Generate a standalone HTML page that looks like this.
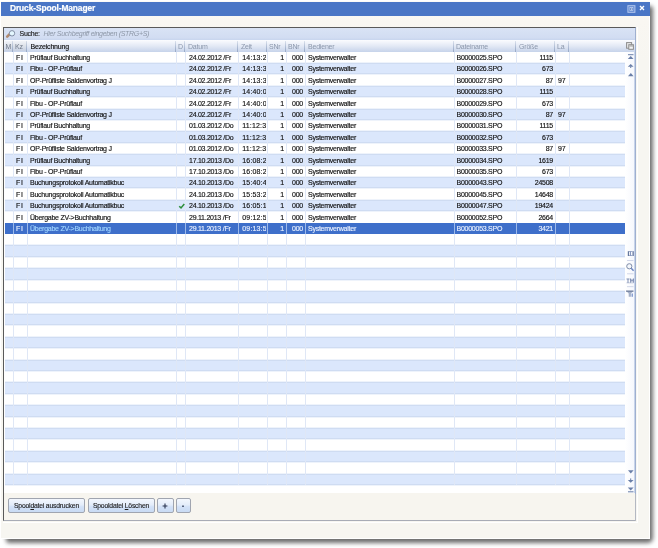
<!DOCTYPE html><html><head><meta charset="utf-8"><style>
*{margin:0;padding:0;box-sizing:border-box}
html,body{width:658px;height:548px;overflow:hidden;background:#fff;font-family:"Liberation Sans",sans-serif;font-variant-ligatures:none}
.abs{position:absolute}
#shadow{position:absolute;left:6px;top:6px;width:647px;height:536.5px;background:#6e6e6e;filter:blur(2.1px);border-radius:0 3px 5px 3px}
#win{position:absolute;left:1px;top:1px;width:649px;height:538px;background:linear-gradient(#fcfbf8,#f9f7f2 20px,#f7f6f1 60px);box-shadow:inset -1px -1px 0 #fff}
#root{position:absolute;left:0;top:0;width:658px;height:548px;will-change:transform}
#title{position:absolute;left:1px;top:1.5px;width:649px;height:14px;background:#4a76c6}
#ttext{position:absolute;left:10px;top:3px;font-size:8.4px;letter-spacing:-0.1px;font-weight:bold;color:#fff;white-space:nowrap;-webkit-text-stroke:0.2px #fff}
#panel{position:absolute;left:3px;top:27px;width:633px;height:494px;border-top:1px solid #5a5a5a;border-left:1px solid #5a5a5a;border-right:1px solid #9fb0d0;border-bottom:1px solid #a8acb6;background:#f7f5ef}
#search{position:absolute;left:4px;top:28px;width:631px;height:12px;background:linear-gradient(#d9e3f5,#d2ddf2 80%,#c8d5ee)}
#hdr{position:absolute;left:4px;top:40px;width:631px;height:11.5px;background:linear-gradient(#fbfcfe,#e3e9f5 50%,#c6d3ea)}
#grid{position:absolute;left:4px;top:51.5px;width:631px;height:441.5px;background:#fff}
.row{position:absolute;left:5px;width:620px;height:11.41px}
.alt{background:#dbe7fc;box-shadow:inset 0 1px 0 #cfdcf2,inset 0 -1px 0 #cfdcf2,0 1px 0 #eef3fb,0 -1px 0 #eef3fb}
.sel{background:#3e6fca}
.vl{position:absolute;width:1px;background:#dfe7f6}
.hs{position:absolute;top:41px;width:1px;height:10.5px;background:linear-gradient(rgba(160,176,200,0.3),#98a9c6)}
.t{position:absolute;font-size:7px;letter-spacing:-0.25px;white-space:nowrap;color:#111;line-height:11.41px;-webkit-text-stroke:0.15px currentColor}
.ht{position:absolute;top:40.8px;font-size:7px;letter-spacing:-0.2px;white-space:nowrap;color:#8a96ab;line-height:11.5px}
.r{text-align:right}
#sb{position:absolute;left:625px;top:51.5px;width:10px;height:441.5px;background:linear-gradient(90deg,#fff,#f6f8fd);border-right:1px solid #c8d4ea}
.btn{position:absolute;top:498px;height:14.5px;border:1px solid #a0a5b0;border-radius:2px;background:linear-gradient(#f3f7fd,#e4edfa 45%,#d2e1f7 60%,#c9dbf4);font-size:6.8px;letter-spacing:-0.2px;color:#1e1e1e;text-align:center;line-height:14px;-webkit-text-stroke:0.12px #1e1e1e;white-space:nowrap}
</style></head><body>
<div id="shadow"></div><div id="win"></div><div id="root">
<div id="title"></div><div id="ttext">Druck-Spool-Manager</div>
<svg class="abs" style="left:627px;top:4.5px" width="9" height="8" viewBox="0 0 9 8"><rect x="0.9" y="0.7" width="7" height="6.6" fill="#6088d0" stroke="#b4c8ee" stroke-width="1"/><rect x="2.9" y="2.5" width="3" height="3" fill="#4a72bc" stroke="#c8d8f4" stroke-width="0.7"/><rect x="3.9" y="3.5" width="1.1" height="1.1" fill="#fff"/></svg>
<svg class="abs" style="left:639.3px;top:4.8px" width="6" height="6" viewBox="0 0 6 6"><path d="M1 1L5 5M5 1L1 5" stroke="#fff" stroke-width="1.4"/></svg>
<div class="abs" style="left:3px;top:27px;width:635px;height:496px;border-right:1px solid #fff;border-bottom:1px solid #fff"></div>
<div id="panel"></div>
<div class="abs" style="left:635px;top:494px;width:1px;height:27px;background:#b4b8c2"></div>
<div id="search"></div>
<div id="hdr"></div>
<div class="abs" style="left:4.5px;top:40.5px;width:22px;height:10.5px;background:linear-gradient(#f2f4f8,#dde2ea 50%,#c6d0e2)"></div>
<div id="grid"></div>
<div class="row" style="top:51.50px"></div>
<div class="row alt" style="top:62.91px"></div>
<div class="row" style="top:74.32px"></div>
<div class="row alt" style="top:85.73px"></div>
<div class="row" style="top:97.14px"></div>
<div class="row alt" style="top:108.55px"></div>
<div class="row" style="top:119.96px"></div>
<div class="row alt" style="top:131.37px"></div>
<div class="row" style="top:142.78px"></div>
<div class="row alt" style="top:154.19px"></div>
<div class="row" style="top:165.60px"></div>
<div class="row alt" style="top:177.01px"></div>
<div class="row" style="top:188.42px"></div>
<div class="row alt" style="top:199.83px"></div>
<div class="row" style="top:211.24px"></div>
<div class="row sel" style="top:222.65px"></div>
<div class="row" style="top:234.06px"></div>
<div class="row alt" style="top:245.47px"></div>
<div class="row" style="top:256.88px"></div>
<div class="row alt" style="top:268.29px"></div>
<div class="row" style="top:279.70px"></div>
<div class="row alt" style="top:291.11px"></div>
<div class="row" style="top:302.52px"></div>
<div class="row alt" style="top:313.93px"></div>
<div class="row" style="top:325.34px"></div>
<div class="row alt" style="top:336.75px"></div>
<div class="row" style="top:348.16px"></div>
<div class="row alt" style="top:359.57px"></div>
<div class="row" style="top:370.98px"></div>
<div class="row alt" style="top:382.39px"></div>
<div class="row" style="top:393.80px"></div>
<div class="row alt" style="top:405.21px"></div>
<div class="row" style="top:416.62px"></div>
<div class="row alt" style="top:428.03px"></div>
<div class="row" style="top:439.44px"></div>
<div class="row alt" style="top:450.85px"></div>
<div class="row" style="top:462.26px"></div>
<div class="row alt" style="top:473.67px"></div>
<div class="vl" style="left:13.0px;top:51.5px;height:433.6px"></div>
<div class="vl" style="left:27.0px;top:51.5px;height:433.6px"></div>
<div class="vl" style="left:176.0px;top:51.5px;height:433.6px"></div>
<div class="vl" style="left:185.0px;top:51.5px;height:433.6px"></div>
<div class="vl" style="left:238.0px;top:51.5px;height:433.6px"></div>
<div class="vl" style="left:267.0px;top:51.5px;height:433.6px"></div>
<div class="vl" style="left:286.0px;top:51.5px;height:433.6px"></div>
<div class="vl" style="left:305.3px;top:51.5px;height:433.6px"></div>
<div class="vl" style="left:454.0px;top:51.5px;height:433.6px"></div>
<div class="vl" style="left:516.0px;top:51.5px;height:433.6px"></div>
<div class="vl" style="left:554.5px;top:51.5px;height:433.6px"></div>
<div class="vl" style="left:569.0px;top:51.5px;height:433.6px"></div>
<div class="vl" style="left:13.0px;top:222.65px;height:11.41px;background:#9dbaea"></div>
<div class="vl" style="left:27.0px;top:222.65px;height:11.41px;background:#9dbaea"></div>
<div class="vl" style="left:176.0px;top:222.65px;height:11.41px;background:#9dbaea"></div>
<div class="vl" style="left:185.0px;top:222.65px;height:11.41px;background:#9dbaea"></div>
<div class="vl" style="left:238.0px;top:222.65px;height:11.41px;background:#9dbaea"></div>
<div class="vl" style="left:267.0px;top:222.65px;height:11.41px;background:#9dbaea"></div>
<div class="vl" style="left:286.0px;top:222.65px;height:11.41px;background:#9dbaea"></div>
<div class="vl" style="left:305.3px;top:222.65px;height:11.41px;background:#9dbaea"></div>
<div class="vl" style="left:454.0px;top:222.65px;height:11.41px;background:#9dbaea"></div>
<div class="vl" style="left:516.0px;top:222.65px;height:11.41px;background:#9dbaea"></div>
<div class="vl" style="left:554.5px;top:222.65px;height:11.41px;background:#9dbaea"></div>
<div class="vl" style="left:569.0px;top:222.65px;height:11.41px;background:#9dbaea"></div>
<div class="hs" style="left:12.0px"></div>
<div class="hs" style="left:26.0px"></div>
<div class="hs" style="left:175.0px"></div>
<div class="hs" style="left:184.0px"></div>
<div class="hs" style="left:237.0px"></div>
<div class="hs" style="left:266.0px"></div>
<div class="hs" style="left:285.0px"></div>
<div class="hs" style="left:304.3px"></div>
<div class="hs" style="left:453.0px"></div>
<div class="hs" style="left:515.0px"></div>
<div class="hs" style="left:553.5px"></div>
<div class="hs" style="left:568.0px"></div>
<div class="ht" style="left:5.5px;color:#6f7888">M</div>
<div class="ht" style="left:15px;color:#6f7888">Kz</div>
<div class="ht" style="left:30.6px;color:#111;-webkit-text-stroke:0.15px #111">Bezeichnung</div>
<div class="ht" style="left:178px;color:#8a96ab">D</div>
<div class="ht" style="left:188px;color:#8a96ab">Datum</div>
<div class="ht" style="left:241px;color:#8a96ab">Zeit</div>
<div class="ht" style="left:269px;color:#8a96ab">SNr</div>
<div class="ht" style="left:288px;color:#8a96ab">BNr</div>
<div class="ht" style="left:308px;color:#8a96ab">Bediener</div>
<div class="ht" style="left:456px;color:#8a96ab">Dateiname</div>
<div class="ht" style="left:519px;color:#8a96ab">Größe</div>
<div class="ht" style="left:557px;color:#8a96ab">La</div>
<div class="t" style="left:19.5px;top:27.5px;color:#222">Suche:</div>
<div class="t" style="left:43.6px;top:27.5px;color:#8e98a8;font-style:italic;letter-spacing:-0.3px;-webkit-text-stroke:0">Hier Suchbegriff eingeben (STRG+S)</div>
<div class="t" style="left:16px;top:51.90px;color:#111;letter-spacing:0.6px">FI</div>
<div class="t" style="left:30px;top:51.90px;color:#111">Prüflauf Buchhaltung</div>
<div class="t" style="left:189px;top:51.90px;color:#111">24.02.2012 /Fr</div>
<div class="t" style="left:242.3px;top:51.90px;color:#111;width:24.2px;overflow:hidden;letter-spacing:0.15px">14:13:29</div>
<div class="t r" style="left:267px;width:17px;top:51.90px;color:#111">1</div>
<div class="t r" style="left:286px;width:17px;top:51.90px;color:#111">000</div>
<div class="t" style="left:308px;top:51.90px;color:#111">Systemverwalter</div>
<div class="t" style="left:456.5px;top:51.90px;color:#111">B0000025.SPO</div>
<div class="t r" style="left:516px;width:37px;top:51.90px;color:#111">1115</div>
<div class="t" style="left:16px;top:63.31px;color:#111;letter-spacing:0.6px">FI</div>
<div class="t" style="left:30px;top:63.31px;color:#111">Fibu - OP-Prüflauf</div>
<div class="t" style="left:189px;top:63.31px;color:#111">24.02.2012 /Fr</div>
<div class="t" style="left:242.3px;top:63.31px;color:#111;width:24.2px;overflow:hidden;letter-spacing:0.15px">14:13:30</div>
<div class="t r" style="left:267px;width:17px;top:63.31px;color:#111">1</div>
<div class="t r" style="left:286px;width:17px;top:63.31px;color:#111">000</div>
<div class="t" style="left:308px;top:63.31px;color:#111">Systemverwalter</div>
<div class="t" style="left:456.5px;top:63.31px;color:#111">B0000026.SPO</div>
<div class="t r" style="left:516px;width:37px;top:63.31px;color:#111">673</div>
<div class="t" style="left:16px;top:74.72px;color:#111;letter-spacing:0.6px">FI</div>
<div class="t" style="left:30px;top:74.72px;color:#111">OP-Prüfliste Saldenvortrag J</div>
<div class="t" style="left:189px;top:74.72px;color:#111">24.02.2012 /Fr</div>
<div class="t" style="left:242.3px;top:74.72px;color:#111;width:24.2px;overflow:hidden;letter-spacing:0.15px">14:13:33</div>
<div class="t r" style="left:267px;width:17px;top:74.72px;color:#111">1</div>
<div class="t r" style="left:286px;width:17px;top:74.72px;color:#111">000</div>
<div class="t" style="left:308px;top:74.72px;color:#111">Systemverwalter</div>
<div class="t" style="left:456.5px;top:74.72px;color:#111">B0000027.SPO</div>
<div class="t r" style="left:516px;width:37px;top:74.72px;color:#111">87</div>
<div class="t" style="left:558px;top:74.72px;color:#111">97</div>
<div class="t" style="left:16px;top:86.13px;color:#111;letter-spacing:0.6px">FI</div>
<div class="t" style="left:30px;top:86.13px;color:#111">Prüflauf Buchhaltung</div>
<div class="t" style="left:189px;top:86.13px;color:#111">24.02.2012 /Fr</div>
<div class="t" style="left:242.3px;top:86.13px;color:#111;width:24.2px;overflow:hidden;letter-spacing:0.15px">14:40:05</div>
<div class="t r" style="left:267px;width:17px;top:86.13px;color:#111">1</div>
<div class="t r" style="left:286px;width:17px;top:86.13px;color:#111">000</div>
<div class="t" style="left:308px;top:86.13px;color:#111">Systemverwalter</div>
<div class="t" style="left:456.5px;top:86.13px;color:#111">B0000028.SPO</div>
<div class="t r" style="left:516px;width:37px;top:86.13px;color:#111">1115</div>
<div class="t" style="left:16px;top:97.54px;color:#111;letter-spacing:0.6px">FI</div>
<div class="t" style="left:30px;top:97.54px;color:#111">Fibu - OP-Prüflauf</div>
<div class="t" style="left:189px;top:97.54px;color:#111">24.02.2012 /Fr</div>
<div class="t" style="left:242.3px;top:97.54px;color:#111;width:24.2px;overflow:hidden;letter-spacing:0.15px">14:40:06</div>
<div class="t r" style="left:267px;width:17px;top:97.54px;color:#111">1</div>
<div class="t r" style="left:286px;width:17px;top:97.54px;color:#111">000</div>
<div class="t" style="left:308px;top:97.54px;color:#111">Systemverwalter</div>
<div class="t" style="left:456.5px;top:97.54px;color:#111">B0000029.SPO</div>
<div class="t r" style="left:516px;width:37px;top:97.54px;color:#111">673</div>
<div class="t" style="left:16px;top:108.95px;color:#111;letter-spacing:0.6px">FI</div>
<div class="t" style="left:30px;top:108.95px;color:#111">OP-Prüfliste Saldenvortrag J</div>
<div class="t" style="left:189px;top:108.95px;color:#111">24.02.2012 /Fr</div>
<div class="t" style="left:242.3px;top:108.95px;color:#111;width:24.2px;overflow:hidden;letter-spacing:0.15px">14:40:08</div>
<div class="t r" style="left:267px;width:17px;top:108.95px;color:#111">1</div>
<div class="t r" style="left:286px;width:17px;top:108.95px;color:#111">000</div>
<div class="t" style="left:308px;top:108.95px;color:#111">Systemverwalter</div>
<div class="t" style="left:456.5px;top:108.95px;color:#111">B0000030.SPO</div>
<div class="t r" style="left:516px;width:37px;top:108.95px;color:#111">87</div>
<div class="t" style="left:558px;top:108.95px;color:#111">97</div>
<div class="t" style="left:16px;top:120.36px;color:#111;letter-spacing:0.6px">FI</div>
<div class="t" style="left:30px;top:120.36px;color:#111">Prüflauf Buchhaltung</div>
<div class="t" style="left:189px;top:120.36px;color:#111">01.03.2012 /Do</div>
<div class="t" style="left:242.3px;top:120.36px;color:#111;width:24.2px;overflow:hidden;letter-spacing:0.15px">11:12:31</div>
<div class="t r" style="left:267px;width:17px;top:120.36px;color:#111">1</div>
<div class="t r" style="left:286px;width:17px;top:120.36px;color:#111">000</div>
<div class="t" style="left:308px;top:120.36px;color:#111">Systemverwalter</div>
<div class="t" style="left:456.5px;top:120.36px;color:#111">B0000031.SPO</div>
<div class="t r" style="left:516px;width:37px;top:120.36px;color:#111">1115</div>
<div class="t" style="left:16px;top:131.77px;color:#111;letter-spacing:0.6px">FI</div>
<div class="t" style="left:30px;top:131.77px;color:#111">Fibu - OP-Prüflauf</div>
<div class="t" style="left:189px;top:131.77px;color:#111">01.03.2012 /Do</div>
<div class="t" style="left:242.3px;top:131.77px;color:#111;width:24.2px;overflow:hidden;letter-spacing:0.15px">11:12:32</div>
<div class="t r" style="left:267px;width:17px;top:131.77px;color:#111">1</div>
<div class="t r" style="left:286px;width:17px;top:131.77px;color:#111">000</div>
<div class="t" style="left:308px;top:131.77px;color:#111">Systemverwalter</div>
<div class="t" style="left:456.5px;top:131.77px;color:#111">B0000032.SPO</div>
<div class="t r" style="left:516px;width:37px;top:131.77px;color:#111">673</div>
<div class="t" style="left:16px;top:143.18px;color:#111;letter-spacing:0.6px">FI</div>
<div class="t" style="left:30px;top:143.18px;color:#111">OP-Prüfliste Saldenvortrag J</div>
<div class="t" style="left:189px;top:143.18px;color:#111">01.03.2012 /Do</div>
<div class="t" style="left:242.3px;top:143.18px;color:#111;width:24.2px;overflow:hidden;letter-spacing:0.15px">11:12:36</div>
<div class="t r" style="left:267px;width:17px;top:143.18px;color:#111">1</div>
<div class="t r" style="left:286px;width:17px;top:143.18px;color:#111">000</div>
<div class="t" style="left:308px;top:143.18px;color:#111">Systemverwalter</div>
<div class="t" style="left:456.5px;top:143.18px;color:#111">B0000033.SPO</div>
<div class="t r" style="left:516px;width:37px;top:143.18px;color:#111">87</div>
<div class="t" style="left:558px;top:143.18px;color:#111">97</div>
<div class="t" style="left:16px;top:154.59px;color:#111;letter-spacing:0.6px">FI</div>
<div class="t" style="left:30px;top:154.59px;color:#111">Prüflauf Buchhaltung</div>
<div class="t" style="left:189px;top:154.59px;color:#111">17.10.2013 /Do</div>
<div class="t" style="left:242.3px;top:154.59px;color:#111;width:24.2px;overflow:hidden;letter-spacing:0.15px">16:08:26</div>
<div class="t r" style="left:267px;width:17px;top:154.59px;color:#111">1</div>
<div class="t r" style="left:286px;width:17px;top:154.59px;color:#111">000</div>
<div class="t" style="left:308px;top:154.59px;color:#111">Systemverwalter</div>
<div class="t" style="left:456.5px;top:154.59px;color:#111">B0000034.SPO</div>
<div class="t r" style="left:516px;width:37px;top:154.59px;color:#111">1619</div>
<div class="t" style="left:16px;top:166.00px;color:#111;letter-spacing:0.6px">FI</div>
<div class="t" style="left:30px;top:166.00px;color:#111">Fibu - OP-Prüflauf</div>
<div class="t" style="left:189px;top:166.00px;color:#111">17.10.2013 /Do</div>
<div class="t" style="left:242.3px;top:166.00px;color:#111;width:24.2px;overflow:hidden;letter-spacing:0.15px">16:08:28</div>
<div class="t r" style="left:267px;width:17px;top:166.00px;color:#111">1</div>
<div class="t r" style="left:286px;width:17px;top:166.00px;color:#111">000</div>
<div class="t" style="left:308px;top:166.00px;color:#111">Systemverwalter</div>
<div class="t" style="left:456.5px;top:166.00px;color:#111">B0000035.SPO</div>
<div class="t r" style="left:516px;width:37px;top:166.00px;color:#111">673</div>
<div class="t" style="left:16px;top:177.41px;color:#111;letter-spacing:0.6px">FI</div>
<div class="t" style="left:30px;top:177.41px;color:#111">Buchungsprotokoll Automatikbuc</div>
<div class="t" style="left:189px;top:177.41px;color:#111">24.10.2013 /Do</div>
<div class="t" style="left:242.3px;top:177.41px;color:#111;width:24.2px;overflow:hidden;letter-spacing:0.15px">15:40:48</div>
<div class="t r" style="left:267px;width:17px;top:177.41px;color:#111">1</div>
<div class="t r" style="left:286px;width:17px;top:177.41px;color:#111">000</div>
<div class="t" style="left:308px;top:177.41px;color:#111">Systemverwalter</div>
<div class="t" style="left:456.5px;top:177.41px;color:#111">B0000043.SPO</div>
<div class="t r" style="left:516px;width:37px;top:177.41px;color:#111">24508</div>
<div class="t" style="left:16px;top:188.82px;color:#111;letter-spacing:0.6px">FI</div>
<div class="t" style="left:30px;top:188.82px;color:#111">Buchungsprotokoll Automatikbuc</div>
<div class="t" style="left:189px;top:188.82px;color:#111">24.10.2013 /Do</div>
<div class="t" style="left:242.3px;top:188.82px;color:#111;width:24.2px;overflow:hidden;letter-spacing:0.15px">15:53:22</div>
<div class="t r" style="left:267px;width:17px;top:188.82px;color:#111">1</div>
<div class="t r" style="left:286px;width:17px;top:188.82px;color:#111">000</div>
<div class="t" style="left:308px;top:188.82px;color:#111">Systemverwalter</div>
<div class="t" style="left:456.5px;top:188.82px;color:#111">B0000045.SPO</div>
<div class="t r" style="left:516px;width:37px;top:188.82px;color:#111">14648</div>
<div class="t" style="left:16px;top:200.23px;color:#111;letter-spacing:0.6px">FI</div>
<div class="t" style="left:30px;top:200.23px;color:#111">Buchungsprotokoll Automatikbuc</div>
<svg class="abs" style="left:178px;top:201.23px" width="8" height="9" viewBox="0 0 8 9"><path d="M1.2 5.2L3 6.9L6.3 2.9" fill="none" stroke="#2e8f3c" stroke-width="1.5"/></svg>
<div class="t" style="left:189px;top:200.23px;color:#111">24.10.2013 /Do</div>
<div class="t" style="left:242.3px;top:200.23px;color:#111;width:24.2px;overflow:hidden;letter-spacing:0.15px">16:05:15</div>
<div class="t r" style="left:267px;width:17px;top:200.23px;color:#111">1</div>
<div class="t r" style="left:286px;width:17px;top:200.23px;color:#111">000</div>
<div class="t" style="left:308px;top:200.23px;color:#111">Systemverwalter</div>
<div class="t" style="left:456.5px;top:200.23px;color:#111">B0000047.SPO</div>
<div class="t r" style="left:516px;width:37px;top:200.23px;color:#111">19424</div>
<div class="t" style="left:16px;top:211.64px;color:#111;letter-spacing:0.6px">FI</div>
<div class="t" style="left:30px;top:211.64px;color:#111">Übergabe ZV->Buchhaltung</div>
<div class="t" style="left:189px;top:211.64px;color:#111">29.11.2013 /Fr</div>
<div class="t" style="left:242.3px;top:211.64px;color:#111;width:24.2px;overflow:hidden;letter-spacing:0.15px">09:12:50</div>
<div class="t r" style="left:267px;width:17px;top:211.64px;color:#111">1</div>
<div class="t r" style="left:286px;width:17px;top:211.64px;color:#111">000</div>
<div class="t" style="left:308px;top:211.64px;color:#111">Systemverwalter</div>
<div class="t" style="left:456.5px;top:211.64px;color:#111">B0000052.SPO</div>
<div class="t r" style="left:516px;width:37px;top:211.64px;color:#111">2664</div>
<div class="t" style="left:16px;top:223.05px;color:#e8f0ff;letter-spacing:0.6px">FI</div>
<div class="t" style="left:30px;top:223.05px;color:#9fd4ff">Übergabe ZV->Buchhaltung</div>
<div class="t" style="left:189px;top:223.05px;color:#e8f0ff">29.11.2013 /Fr</div>
<div class="t" style="left:242.3px;top:223.05px;color:#e8f0ff;width:24.2px;overflow:hidden;letter-spacing:0.15px">09:13:50</div>
<div class="t r" style="left:267px;width:17px;top:223.05px;color:#e8f0ff">1</div>
<div class="t r" style="left:286px;width:17px;top:223.05px;color:#e8f0ff">000</div>
<div class="t" style="left:308px;top:223.05px;color:#e8f0ff">Systemverwalter</div>
<div class="t" style="left:456.5px;top:223.05px;color:#e8f0ff">B0000053.SPO</div>
<div class="t r" style="left:516px;width:37px;top:223.05px;color:#e8f0ff">3421</div>
<div id="sb"></div>
<svg class="abs" style="left:0;top:26px" width="20" height="16" viewBox="0 0 20 16"><path d="M7.2 10.6L9.4 8.4" stroke="#b08a70" stroke-width="2.6" stroke-linecap="round"/><circle cx="12" cy="7.3" r="2.7" fill="#e4f7ff" stroke="#6d7892" stroke-width="0.8"/></svg>
<svg class="abs" style="left:626px;top:42px" width="8" height="8" viewBox="0 0 8 8"><rect x="0.6" y="0.6" width="5" height="5.6" fill="#e8e8e8" stroke="#8c8c8c" stroke-width="1"/><rect x="2.8" y="2.7" width="4.6" height="4.6" fill="#f4f4f4" stroke="#8c8c8c" stroke-width="1"/><rect x="3.4" y="3.4" width="3.6" height="1.1" fill="#a0a0a0"/></svg>
<svg class="abs" style="left:0;top:0" width="658" height="548" viewBox="0 0 658 548"><rect x="628" y="54.2" width="5.5" height="1" fill="#6a7fa8"/><path d="M627.8 59L630.6999999999999 56L633.5999999999999 59Z" fill="#6a7fa8"/><path d="M627.8 66.8L630.6999999999999 64L633.5999999999999 66.8Z" fill="#6a7fa8"/><rect x="630.2" y="66.5" width="1" height="1.5" fill="#6a7fa8"/><path d="M628 76.2L630.8 73L633.6 76.2Z" fill="#6a7fa8"/><path d="M628 470.2L630.8 473.4L633.6 470.2Z" fill="#6a7fa8"/><path d="M627.8 480L630.6999999999999 482.8L633.5999999999999 480Z" fill="#6a7fa8"/><rect x="630.2" y="478.4" width="1" height="1.6" fill="#6a7fa8"/><path d="M627.8 487.6L630.6999999999999 490.6L633.5999999999999 487.6Z" fill="#6a7fa8"/><rect x="628" y="491.3" width="5.5" height="1" fill="#6a7fa8"/><rect x="627.8" y="251.2" width="1.3" height="4.8" fill="#66789e"/><rect x="630" y="251.2" width="1" height="4.8" fill="#8a9ac0"/><rect x="632.5" y="251.2" width="1.3" height="4.8" fill="#66789e"/><rect x="629" y="251.2" width="3.5" height="0.8" fill="#8a9ac0"/><rect x="629" y="255.2" width="3.5" height="0.8" fill="#8a9ac0"/><rect x="627" y="260.2" width="6.5" height="0.7" fill="#c0c8e0"/><circle cx="629.3" cy="266.3" r="2.6" fill="#f4f7fc" stroke="#7e8ca8" stroke-width="1"/><path d="M631.2 268.3L633.6 270.8" stroke="#6a84c0" stroke-width="1.4"/><rect x="627" y="273.5" width="6.5" height="0.7" fill="#c0c8e0"/><path d="M626.5 278.5h3v1h-1v3.5h-1v-3.5h-1zM630 278.5h1l1 2l1-2h1v4.3h-0.9v-2.5l-1.1 2h-0.1l-1-2v2.5h-0.9z" fill="#8090b4"/><rect x="626.5" y="282.6" width="7" height="0.6" fill="#9aa6c4"/><rect x="627" y="286.4" width="6.5" height="0.7" fill="#c0c8e0"/><path d="M626 290.8h7.5l-2.6 2.6v3.4h-2.2v-3.4z" fill="#a4b0c8"/><rect x="626" y="290.6" width="7.5" height="1.1" fill="#6a7896"/><rect x="631.5" y="293.5" width="1.5" height="3.3" fill="#8aa0d0"/></svg>
<div class="btn" style="left:8px;width:77px">Spool<u>d</u>atei ausdrucken</div>
<div class="btn" style="left:87.5px;width:67px">Spooldatei <u>L</u>öschen</div>
<div class="btn" style="left:156.5px;width:17px"></div>
<div class="btn" style="left:176px;width:14.5px"></div>
<svg class="abs" style="left:0;top:0" width="658" height="548"><path d="M162.6 506h4.8M165 503.6v4.8" stroke="#2a3550" stroke-width="1.1"/><rect x="182" y="505.6" width="2" height="1.2" fill="#3a4560"/></svg>
</div></body></html>
